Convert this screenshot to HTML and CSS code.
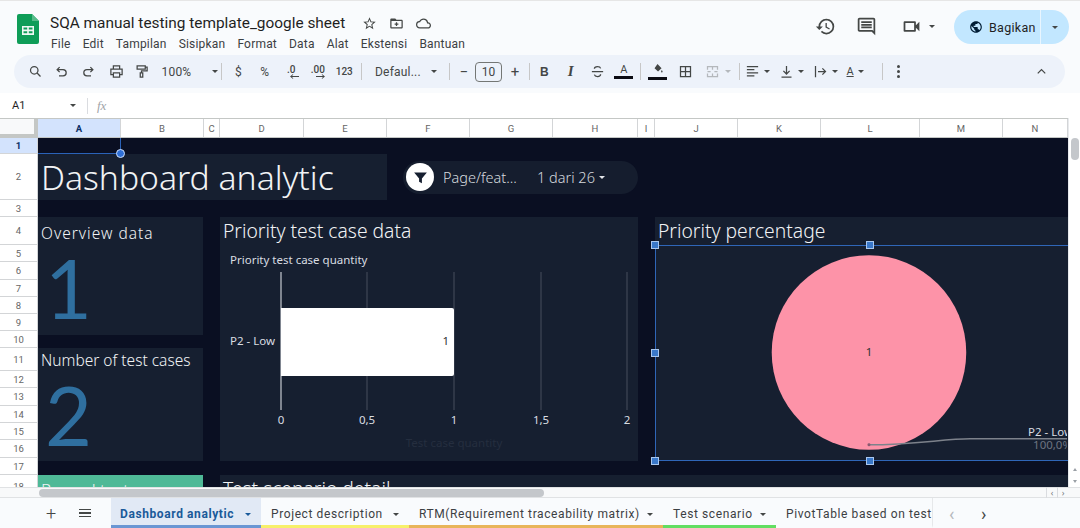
FILE: index.html
```html
<!DOCTYPE html>
<html lang="en">
<head>
  <meta charset="UTF-8" />
  <title>SQA manual testing template_google sheet</title>
  <link rel="stylesheet" href="styles.css">
</head>
<body>

  <!-- Title bar -->
  <header class="topbar">
    <svg class="logo" viewBox="0 0 22 30">
      <path d="M2 0h13l7 7v21a2 2 0 0 1-2 2H2a2 2 0 0 1-2-2V2a2 2 0 0 1 2-2z" fill="#0f9d58"/>
      <path d="M15 0l7 7h-7z" fill="#57bb8a"/>
      <path d="M5 12h12v9H5z M6.500 13.500v2h3.700v-2z M11.800 13.500v2h3.700v-2z M6.500 17.300v2h3.700v-2z M11.800 17.300v2h3.700v-2z" fill="#f1f8f4" fill-rule="evenodd"/>
    </svg>
    <div class="doc-info">
      <div class="doc-title-row">
        <span class="doc-title">SQA manual testing template_google sheet</span>
        <svg class="doc-icon" viewBox="0 0 24 24"><path d="M22 9.240l-7.190-.620L12 2 9.190 8.630 2 9.240l5.460 4.730L5.820 21 12 17.270 18.180 21l-1.630-7.030L22 9.240zM12 15.400l-3.760 2.270 1-4.280-3.320-2.880 4.380-.380L12 6.100l1.710 4.040 4.380.380-3.320 2.880 1 4.280L12 15.400z"/></svg>
        <svg class="doc-icon" viewBox="0 0 24 24"><path d="M20 6h-8l-2-2H4c-1.100 0-2 .9-2 2v12c0 1.100.9 2 2 2h16c1.100 0 2-.9 2-2V8c0-1.100-.9-2-2-2zm0 12H4V8h16v10zM11 10h2v2h2v2h-2v2h-2v-2H9v-2h2z"/></svg>
        <svg class="doc-icon" viewBox="0 0 24 24"><path d="M19.350 10.040A7.490 7.490 0 0 0 12 4C9.110 4 6.600 5.640 5.350 8.040A5.994 5.994 0 0 0 0 14c0 3.310 2.690 6 6 6h13c2.760 0 5-2.240 5-5 0-2.640-2.050-4.780-4.650-4.960zM19 18H6c-2.210 0-4-1.790-4-4 0-2.050 1.530-3.760 3.560-3.970l1.070-.11.500-.95A5.469 5.469 0 0 1 12 6c2.620 0 4.880 1.860 5.390 4.430l.3 1.500 1.530.11A2.980 2.980 0 0 1 22 15c0 1.650-1.350 3-3 3z"/></svg>
      </div>
      <nav class="menu">
        <span>File</span><span>Edit</span><span>Tampilan</span><span>Sisipkan</span><span>Format</span><span>Data</span><span>Alat</span><span>Ekstensi</span><span>Bantuan</span>
      </nav>
    </div>
    <div class="top-actions">
      <svg class="top-icon" viewBox="0 0 24 24"><path d="M13 3a9 9 0 0 0-9 9H1l3.890 3.890.07.140L9 12H6c0-3.870 3.130-7 7-7s7 3.130 7 7-3.130 7-7 7c-1.930 0-3.680-.79-4.940-2.060l-1.420 1.420A8.954 8.954 0 0 0 13 21a9 9 0 0 0 0-18zm-1 5v5l4.280 2.540.72-1.210-3.500-2.080V8H12z"/></svg>
      <svg class="top-icon" viewBox="0 0 24 24"><path d="M21.990 4c0-1.100-.89-2-1.990-2H4c-1.100 0-2 .9-2 2v12c0 1.100.9 2 2 2h14l4 4-.01-18zM20 4v13.170L18.830 16H4V4h16zM6 12h12v2H6zm0-3h12v2H6zm0-3h12v2H6z"/></svg>
      <div class="meet">
        <svg class="top-icon" viewBox="0 0 24 24"><path d="M15 8v8H5V8h10m1-2H4c-.55 0-1 .45-1 1v10c0 .55.45 1 1 1h12c.55 0 1-.45 1-1v-3.500l4 4v-11l-4 4V7c0-.55-.45-1-1-1z"/></svg>
        <i class="caret"></i>
      </div>
      <div class="share">
        <div class="share-main">
          <svg class="globe" viewBox="0 0 24 24"><path d="M12 2C6.480 2 2 6.480 2 12s4.480 10 10 10 10-4.480 10-10S17.520 2 12 2zm-1 17.930c-3.950-.49-7-3.850-7-7.930 0-.62.08-1.210.21-1.790L9 15v1c0 1.100.9 2 2 2v1.930zm6.900-2.540c-.26-.81-1-1.390-1.900-1.390h-1v-3c0-.55-.45-1-1-1H8v-2h2c.55 0 1-.45 1-1V7h2c1.100 0 2-.9 2-2v-.41c2.930 1.190 5 4.060 5 7.410 0 2.080-.8 3.970-2.100 5.390z"/></svg>
          <span>Bagikan</span>
        </div>
        <div class="share-more"><i class="caret"></i></div>
      </div>
    </div>
  </header>

  <!-- Toolbar -->
  <div class="toolbar">
    <button class="tb"><svg viewBox="0 0 24 24"><circle cx="10" cy="10" r="6"/><path d="M14.500 14.500L20 20"/></svg></button>
    <button class="tb"><svg viewBox="0 0 24 24"><path d="M9 5L5 9l4 4M5 9h9.500a5 5 0 0 1 0 10H8"/></svg></button>
    <button class="tb"><svg viewBox="0 0 24 24"><path d="M15 5l4 4-4 4M19 9H9.500a5 5 0 0 0 0 10H16"/></svg></button>
    <button class="tb tb-print"><svg viewBox="0 0 24 24"><path d="M7 8V3h10v5M7 17H3v-9h18v9h-4M7 14h10v7H7z"/></svg></button>
    <button class="tb"><svg viewBox="0 0 24 24"><path d="M5 3h13v5H5zM18 5h3v6h-9v3M10 14h4v7h-4z"/></svg></button>
    <div class="tb-select zoom-select">100%<i class="caret"></i></div>
    <i class="sep"></i>
    <button class="tb tb-text">$</button>
    <button class="tb tb-text">%</button>
    <button class="tb tb-text tb-small tb-stack">.0<svg viewBox="0 0 12 6"><path d="M12 3H2M5 0.500L2 3l3 2.500"/></svg></button>
    <button class="tb tb-text tb-small tb-stack">.00<svg viewBox="0 0 12 6"><path d="M0 3h10M7 0.500L10 3 7 5.500"/></svg></button>
    <button class="tb tb-text tb-small">123</button>
    <i class="sep"></i>
    <div class="tb-select font-select">Defaul...<i class="caret"></i></div>
    <i class="sep"></i>
    <button class="tb tb-text tb-size">−</button>
    <div class="size-box">10</div>
    <button class="tb tb-text tb-size tb-plus">+</button>
    <i class="sep"></i>
    <button class="tb tb-text tb-bold">B</button>
    <button class="tb tb-text tb-italic">I</button>
    <button class="tb"><svg viewBox="0 0 24 24"><path d="M3 12h18M17 7c-.5-2-2.500-3-5-3-2.500 0-5 1-5 3.500M7 17c.5 2 2.500 3 5 3 2.500 0 5-1 5-3.500"/></svg></button>
    <button class="tb tb-color"><span>A</span><i class="color-bar"></i></button>
    <i class="sep"></i>
    <button class="tb tb-color"><svg viewBox="0 0 24 24"><path class="filled" d="M12 2l7.500 7.500-6.500 6-6.500-6zM20 13c1 1.500 1.500 2.300 1.500 3a1.500 1.500 0 0 1-3 0c0-.7.5-1.500 1.500-3z"/></svg><i class="color-bar"></i></button>
    <button class="tb tb-border"><svg viewBox="0 0 24 24"><path d="M4 4h16v16H4zM12 4v16M4 12h16"/></svg></button>
    <button class="tb tb-muted"><svg viewBox="0 0 24 24"><path d="M4 9V4h16v5M4 15v5h16v-5M12 4v5M12 15v5M4 12h5M20 12h-5"/></svg></button>
    <i class="caret caret-muted"></i>
    <i class="sep"></i>
    <button class="tb tb-drop"><svg viewBox="0 0 24 24"><path d="M3 4h18M3 9h12M3 14h18M3 19h12"/></svg><i class="caret"></i></button>
    <button class="tb tb-drop"><svg viewBox="0 0 24 24"><path d="M12 3v13M7 11l5 5 5-5M4 21h16"/></svg><i class="caret"></i></button>
    <button class="tb tb-drop"><svg viewBox="0 0 24 24"><path d="M4 3v18M8 12h12M15 7l5 5-5 5"/></svg><i class="caret"></i></button>
    <button class="tb tb-drop tb-rotate"><span>A</span><i class="caret"></i></button>
    <i class="sep"></i>
    <button class="tb tb-dots"><i></i><i></i><i></i></button>
    <button class="tb tb-collapse"><svg viewBox="0 0 24 24"><path d="M6 15l6-6 6 6"/></svg></button>
  </div>

  <!-- Formula bar -->
  <div class="formula-bar">
    <span class="cell-ref">A1</span>
    <i class="caret"></i>
    <i class="formula-sep"></i>
    <span class="fx">fx</span>
  </div>

  <!-- Grid -->
  <div class="sheet">
    <div class="corner"></div>
    <div class="col-heads">
      <span class="active">A</span><span>B</span><span>C</span><span>D</span><span>E</span><span>F</span><span>G</span><span>H</span><span>I</span><span>J</span><span>K</span><span>L</span><span>M</span><span>N</span>
    </div>
    <div class="vscroll">
      <i class="vthumb"></i>
      <i class="varrow varrow-up"></i>
      <i class="varrow varrow-down"></i>
    </div>
    <div class="row-heads">
      <span class="active">1</span><span>2</span><span>3</span><span>4</span><span>5</span><span>6</span><span>7</span><span>8</span><span>9</span><span>10</span><span>11</span><span>12</span><span>13</span><span>14</span><span>15</span><span>16</span><span>17</span><span>18</span>
    </div>

    <div class="canvas">
      <div class="selected-cell"><i class="cell-handle"></i></div>
      <h1 class="dash-title">Dashboard analytic</h1>

      <div class="filter-chip">
        <span class="filter-btn">
          <svg viewBox="0 0 24 24"><path d="M3 5h18l-7 8.500V20l-4-2v-4.500z"/></svg>
        </span>
        <span class="filter-name">Page/feat...</span>
        <span class="filter-count">1 dari 26</span>
        <i class="caret caret-light"></i>
      </div>

      <section class="card stat-overview">
        <h2>Overview data</h2>
        <div class="big-num">1</div>
      </section>

      <section class="card stat-cases">
        <h2>Number of test cases</h2>
        <div class="big-num">2</div>
      </section>

      <section class="card stat-passed">
        <h2>Passed test</h2>
      </section>

      <section class="card chart-card">
        <h3>Priority test case data</h3>
        <svg class="chart" viewBox="0 0 418 216">
          <text class="chart-title" x="10" y="19">Priority test case quantity</text>
          <path class="axis" d="M61 27V165"/>
          <path class="grid-line" d="M147 27V165M234 27V165M321 27V165M407 27V165"/>
          <path class="bar" d="M61 63H232a2 2 0 0 1 2 2V129a2 2 0 0 1-2 2H61z"/>
          <text class="tick" x="10" y="100">P2 - Low</text>
          <text class="bar-value" x="229" y="100" text-anchor="end">1</text>
          <text class="tick" x="61" y="179" text-anchor="middle">0</text>
          <text class="tick" x="147" y="179" text-anchor="middle">0,5</text>
          <text class="tick" x="234" y="179" text-anchor="middle">1</text>
          <text class="tick" x="321" y="179" text-anchor="middle">1,5</text>
          <text class="tick" x="407" y="179" text-anchor="middle">2</text>
          <text class="axis-title" x="234" y="202" text-anchor="middle">Test case quantity</text>
        </svg>
      </section>

      <section class="card pie-card">
        <h3>Priority percentage</h3>
        <div class="pie-frame">
          <svg class="chart" viewBox="0 0 413 216">
            <circle cx="214.500" cy="107.500" r="97.500" fill="#fd93a8"/>
            <text class="bar-value" x="214.500" y="111" text-anchor="middle">1</text>
            <path class="pie-leader" d="M214.500 200C260 200 290 194 316 194H413"/>
            <circle cx="214.500" cy="200" r="1.500" fill="#8a5a70"/>
            <text class="tick" x="374" y="191">P2 - Low</text>
            <text class="tick-dim" x="379" y="204">100,0%</text>
          </svg>
          <i class="handle h-tl"></i>
          <i class="handle h-tc"></i>
          <i class="handle h-ml"></i>
          <i class="handle h-bl"></i>
          <i class="handle h-bc"></i>
        </div>
      </section>

      <section class="card detail-card">
        <h3>Test scenario detail</h3>
      </section>
    </div>
  </div>

  <!-- Horizontal scroll -->
  <div class="hscroll">
    <i class="hthumb"></i>
    <span class="harrows"><i>‹</i><i>›</i></span>
  </div>

  <!-- Sheet tabs -->
  <footer class="tabs">
    <span class="tab-tool tab-add">+</span>
    <span class="tab-tool tab-list"><i></i><i></i><i></i></span>
    <div class="tab tab-active">Dashboard analytic<i class="caret"></i></div>
    <div class="tab tab-yellow">Project description<i class="caret"></i></div>
    <div class="tab tab-orange">RTM(Requirement traceability matrix)<i class="caret"></i></div>
    <div class="tab tab-green">Test scenario<i class="caret"></i></div>
    <div class="tab tab-cut">PivotTable based on test</div>
    <span class="tab-arrow dim">‹</span>
    <span class="tab-arrow">›</span>
  </footer>

</body>
</html>
```

FILE: styles.css
```css
* {
  box-sizing: border-box;
  margin: 0;
  padding: 0;
}

html, body {
  height: 528px;
  overflow: hidden;
}

body {
  width: 1080px;
  background: #f9fbfd;
  color: #3c4043;
  font-family: "Open Sans", "Liberation Sans", sans-serif;
  display: flex;
  flex-direction: column;
}

.caret {
  display: inline-block;
  width: 0;
  height: 0;
  flex: none;
  border-left: 3.5px solid transparent;
  border-right: 3.5px solid transparent;
  border-top: 3.5px solid #444746;
}

/* Title bar */
.topbar {
  height: 55px;
  flex: none;
  display: flex;
  border-top: 1px solid #e6e6e6;
  padding: 13px 11px 0 17px;
}

.logo {
  width: 22px;
  height: 30px;
  flex: none;
}

.doc-info {
  margin-left: 11px;
  margin-top: -2px;
}

.doc-title-row {
  display: flex;
  align-items: center;
  height: 22px;
}

.doc-title {
  font-family: "Roboto", sans-serif;
  font-size: 15.4px;
  color: #1f1f1f;
  width: 312px;
}

.doc-icon {
  width: 15px;
  height: 15px;
  fill: #444746;
  margin-right: 12px;
}

.menu {
  display: flex;
  gap: 12px;
  font-family: "Roboto", sans-serif;
  font-size: 12px;
  line-height: 18px;
  letter-spacing: 0.2px;
  color: #3c4043;
  margin: 1px 0 0 1px;
}

.top-actions {
  margin-left: auto;
  display: flex;
  align-items: flex-start;
}

.top-icon {
  width: 21px;
  height: 21px;
  fill: #444746;
}

.top-actions > .top-icon {
  margin-top: 2px;
  margin-right: 20px;
}

.meet {
  display: flex;
  align-items: center;
  gap: 7px;
  margin: 2px 19px 0 4px;
  height: 21px;
}

.share {
  width: 115px;
  height: 34px;
  margin-top: -4px;
  background: #c2e7ff;
  border-radius: 17px;
  display: flex;
  font-family: "Roboto", sans-serif;
  font-size: 12.5px;
  letter-spacing: 0.3px;
  color: #1f1f1f;
}

.share-main {
  flex: 1;
  display: flex;
  align-items: center;
  gap: 6px;
  padding-left: 15px;
  border-right: 1px solid #e8f5fe;
}

.globe {
  width: 14px;
  height: 14px;
  fill: #001d35;
}

.share-more {
  width: 28px;
  display: flex;
  align-items: center;
  justify-content: center;
}

/* Toolbar */
.toolbar {
  height: 33px;
  flex: none;
  margin: 0 15px 0 14px;
  padding-left: 8px;
  background: #edf2fa;
  border-radius: 17px;
  display: flex;
  align-items: center;
}

.tb {
  width: 26.5px;
  height: 26px;
  flex: none;
  border: none;
  background: none;
  color: #444746;
  display: flex;
  align-items: center;
  justify-content: center;
  font-family: "Roboto", sans-serif;
  font-size: 12px;
}

.tb svg {
  width: 15px;
  height: 15px;
  fill: none;
  stroke: #444746;
  stroke-width: 2;
}

.tb-print {
  margin-left: 1.5px;
  margin-right: -1.5px;
}

.tb-small {
  font-size: 10px;
  font-weight: 500;
}

.tb-stack {
  flex-direction: column;
  line-height: 9px;
}

.tb-stack svg {
  width: 10px;
  height: 5px;
  stroke-width: 1.2;
  margin-left: 6px;
}

.tb-select {
  display: flex;
  align-items: center;
  font-family: "Roboto", sans-serif;
  font-size: 12px;
  letter-spacing: 0.2px;
  color: #444746;
  flex: none;
}

.zoom-select {
  width: 56.5px;
  margin-left: 7px;
  justify-content: space-between;
}

.font-select {
  width: 62px;
  margin-left: 10.5px;
  margin-right: 9px;
  justify-content: space-between;
}

.sep {
  width: 1px;
  height: 17px;
  background: #c7c7c7;
  margin: 0 3px;
  flex: none;
}

.tb-size {
  width: 22px;
  font-size: 15px;
}

.tb-plus {
  margin-left: 2px;
}

.size-box {
  width: 27px;
  height: 20px;
  flex: none;
  border: 1px solid #747775;
  border-radius: 4px;
  text-align: center;
  font-family: "Roboto", sans-serif;
  font-size: 12px;
  line-height: 18px;
  color: #444746;
}

.tb-bold {
  margin-left: -2px;
  font-weight: 700;
  font-family: "Liberation Sans", sans-serif;
}

.tb-italic {
  font-family: "Liberation Serif", serif;
  font-style: italic;
  font-size: 15px;
  font-weight: 700;
}

.tb-color {
  flex-direction: column;
  gap: 1px;
  font-size: 11px;
}

.tb-color span {
  line-height: 11px;
}

.tb-color svg {
  width: 13px;
  height: 13px;
}

.tb-color .filled {
  fill: #444746;
  stroke: none;
}

.color-bar {
  width: 19px;
  height: 3px;
  background: #0b0b12;
}

.tb-border {
  margin-left: 2px;
}

.tb-muted svg {
  stroke: #b4b8bc;
}

.caret-muted {
  border-top-color: #b4b8bc;
  margin: 0 5px 0 -1px;
}

.tb-drop {
  width: 34px;
  gap: 4px;
  justify-content: flex-start;
  padding-left: 2px;
}

.tb-rotate {
  font-size: 11px;
  text-decoration: underline;
}

.tb-dots {
  flex-direction: column;
  gap: 2px;
}

.tb-dots i {
  width: 3px;
  height: 3px;
  background: #444746;
  border-radius: 50%;
}

.tb-collapse {
  margin-left: auto;
  margin-right: 10px;
}

/* Formula bar */
.formula-bar {
  height: 25px;
  margin-top: 5px;
  flex: none;
  background: #fff;
  display: flex;
  align-items: center;
  padding-left: 12px;
  font-family: "Roboto", sans-serif;
  font-size: 11px;
  color: #1f1f1f;
}

.cell-ref {
  width: 58px;
}

.formula-sep {
  width: 1px;
  height: 16px;
  background: #dadce0;
  margin: 0 9px 0 11px;
}

.fx {
  font-family: "Liberation Serif", serif;
  font-style: italic;
  font-size: 13px;
  color: #a0a4a8;
}

/* Sheet grid */
.sheet {
  --cols: 83px 83px 16px 84px 83px 83px 83px 85px 17px 83px 83px 99px 83px 65px;
  --rows: 16px 46px 17px 28px 17px 18px 17px 17px 17px 17px 23px 17px 18px 17px 17px 18px 17px 24px;
  height: 369px;
  flex: none;
  display: grid;
  grid-template-columns: 38px 1030px 12px;
  grid-template-rows: 20px 349px;
  background: #fff;
  overflow: hidden;
}

.corner {
  background: #f8f9fa;
  border-right: 4px solid #c4c7c5;
  border-bottom: 4px solid #c4c7c5;
  border-top: 1px solid #c4c7c5;
}

.col-heads {
  display: grid;
  grid-template-columns: var(--cols);
  border-top: 1px solid #c4c7c5;
  border-bottom: 1px solid #c4c7c5;
  font-family: "Roboto", sans-serif;
  font-size: 9.500px;
  color: #666;
}

.col-heads span {
  display: flex;
  align-items: center;
  justify-content: center;
  border-right: 1px solid #d3d5d7;
}

.col-heads .active {
  background: #d3e3fd;
  color: #0b2f66;
  font-weight: 700;
}

.vscroll {
  grid-row: 1 / 3;
  grid-column: 3;
  background: #fff;
  border-left: 1px solid #e8eaed;
  padding: 20px 2px 0;
  display: flex;
  flex-direction: column;
  align-items: center;
}

.vthumb {
  width: 8px;
  height: 22px;
  background: #c4c7cb;
  border-radius: 4px;
}

.varrow {
  width: 0;
  height: 0;
  border-left: 2.5px solid transparent;
  border-right: 2.5px solid transparent;
}

.varrow-up {
  margin-top: auto;
  border-bottom: 3px solid #9aa0a6;
}

.varrow-down {
  margin: 9px 0 4px;
  border-top: 3px solid #9aa0a6;
}

.row-heads {
  display: grid;
  grid-template-rows: var(--rows);
  font-family: "Roboto", sans-serif;
  font-size: 9.500px;
  color: #666;
  overflow: hidden;
}

.row-heads span {
  display: flex;
  align-items: center;
  justify-content: center;
  border-bottom: 1px solid #d3d5d7;
  border-right: 1px solid #d3d5d7;
}

.row-heads .active {
  background: #d3e3fd;
  color: #0b2f66;
  font-weight: 700;
}

.canvas {
  display: grid;
  grid-template-columns: var(--cols);
  grid-template-rows: var(--rows);
  background: #0a0f22;
  font-family: "Noto Sans", sans-serif;
  font-weight: 300;
  color: #f1f3f5;
  overflow: hidden;
}

.selected-cell {
  grid-column: 1;
  grid-row: 1;
  border: 1px solid #2a62b8;
  border-width: 0 1px 1.500px 0;
  position: relative;
}

.cell-handle {
  position: absolute;
  right: -5px;
  bottom: -5px;
  width: 9px;
  height: 9px;
  background: #2f6fd6;
  border: 1px solid #cfe0fb;
  border-radius: 50%;
}

.dash-title {
  grid-column: 1 / 6;
  grid-row: 2;
  background: #161f30;
  font-size: 33.700px;
  font-weight: 300;
  line-height: 46px;
  padding-left: 3px;
  white-space: nowrap;
}

.filter-chip {
  grid-column: 6 / 9;
  grid-row: 2;
  align-self: center;
  height: 33px;
  margin-left: 16px;
  background: #151d2e;
  border-radius: 17px;
  display: flex;
  align-items: center;
  font-size: 14.500px;
  color: #d6dadf;
}

.filter-btn {
  width: 28px;
  height: 28px;
  margin-left: 3px;
  background: #fff;
  border-radius: 50%;
  display: flex;
  align-items: center;
  justify-content: center;
}

.filter-btn svg {
  width: 17px;
  height: 17px;
  fill: #161f30;
}

.filter-name {
  width: 94px;
  margin-left: 9px;
  white-space: nowrap;
}

.filter-count {
  margin-right: 4px;
  white-space: nowrap;
}

.caret-light {
  border-top-color: #e4e6ea;
}

.card {
  background: #161f30;
  overflow: hidden;
}

.stat-overview {
  grid-column: 1 / 3;
  grid-row: 4 / 10;
  margin: 0 1px -4px 0;
}

.stat-cases {
  grid-column: 1 / 3;
  grid-row: 11 / 17;
  margin: 0 1px -3px 0;
}

.stat-passed {
  grid-column: 1 / 3;
  grid-row: 18;
  margin-right: 1px;
  background: #4fb997;
}

.card h2 {
  font-size: 15.500px;
  font-weight: 300;
  line-height: 24px;
  padding: 4px 0 0 3px;
  white-space: nowrap;
}

.stat-overview h2 {
  letter-spacing: 1px;
}

.stat-cases h2 {
  padding-top: 0;
}

.stat-passed h2 {
  font-size: 17px;
  padding-top: 3px;
}

.big-num {
  font-family: "Lato", sans-serif;
  font-size: 81px;
  font-weight: 400;
  line-height: 88px;
  color: #2f6f9f;
  padding-left: 7px;
  margin-top: -1px;
}

.chart-card {
  grid-column: 4 / 9;
  grid-row: 4 / 17;
  margin-bottom: -3px;
}

.pie-card {
  grid-column: 10 / 15;
  grid-row: 4 / 17;
  margin-bottom: -3px;
  overflow: visible;
}

.detail-card {
  grid-column: 4 / 15;
  grid-row: 18;
}

.card h3 {
  font-size: 19.300px;
  font-weight: 300;
  line-height: 28px;
  padding-left: 3px;
  white-space: nowrap;
}

.chart {
  display: block;
  width: 100%;
  height: 216px;
  font-family: "Noto Sans", sans-serif;
  font-size: 11.500px;
  font-weight: 400;
}

.chart-title,
.tick {
  fill: #d9dde2;
}

.tick-dim {
  fill: #6d7480;
}

.axis {
  stroke: #c8ccd2;
  stroke-width: 1.200;
}

.grid-line {
  stroke: #474f5d;
  stroke-width: 1;
}

.bar {
  fill: #fff;
}

.bar-value {
  fill: #333;
}

.axis-title {
  fill: #252e3f;
}

.pie-frame {
  position: relative;
  height: 216px;
  border: 1px solid #2f66b8;
  border-right: none;
}

.pie-frame .chart {
  margin: -1px 0 0 -1px;
}

.pie-leader {
  fill: none;
  stroke: #7d828b;
  stroke-width: 1.500;
}

.handle {
  position: absolute;
  width: 8px;
  height: 8px;
  background: #3a78c9;
  border: 1px solid #a9c7ee;
}

.h-tl { left: -5px; top: -5px; }
.h-tc { left: 210px; top: -5px; }
.h-ml { left: -5px; top: 103px; }
.h-bl { left: -5px; bottom: -5px; }
.h-bc { left: 210px; bottom: -5px; }

/* Horizontal scroll */
.hscroll {
  height: 11px;
  flex: none;
  position: relative;
  background: #f8f9fa;
  border-top: 1px solid #e0e2e4;
  border-bottom: 1px solid #e0e2e4;
}

.hthumb {
  position: absolute;
  left: 39px;
  top: 1px;
  width: 505px;
  height: 8px;
  background: #c4c7cb;
  border-radius: 4px;
}

.harrows {
  position: absolute;
  right: 12px;
  top: -1px;
  display: flex;
  font-size: 9px;
  line-height: 11px;
  color: #70757a;
}

.harrows i {
  width: 11px;
  text-align: center;
  font-style: normal;
  border-left: 1px solid #dadce0;
}

/* Sheet tabs */
.tabs {
  flex: 1;
  display: flex;
  align-items: stretch;
  font-family: "Roboto", sans-serif;
  font-size: 12px;
  letter-spacing: 0.6px;
  color: #3c4043;
  white-space: nowrap;
}

.tab-tool {
  width: 33px;
  display: flex;
  align-items: center;
  justify-content: center;
  color: #444746;
}

.tab-add {
  margin-left: 35px;
  font-size: 18px;
  font-weight: 300;
}

.tab-list {
  flex-direction: column;
  gap: 2px;
  margin-right: 10px;
}

.tab-list i {
  width: 12px;
  height: 1.500px;
  background: #444746;
}

.tab {
  display: flex;
  align-items: center;
  justify-content: space-between;
  padding: 5px 10px 0;
  border-bottom: 3px solid transparent;
}

.tab-active {
  width: 150px;
  background: #e1e9f5;
  border-bottom-color: #6a96d3;
  color: #1a5a9a;
  font-weight: 700;
  padding-left: 9px;
}

.tab-active .caret {
  border-top-color: #1a5a9a;
}

.tab-yellow {
  width: 148px;
  border-bottom-color: #f7f06a;
}

.tab-orange {
  width: 254px;
  border-bottom-color: #e8b55a;
}

.tab-green {
  width: 113px;
  border-bottom-color: #62de62;
}

.tab-cut {
  width: 157px;
  overflow: hidden;
  border-right: 1px solid #e6e8ea;
}

.tab-arrow {
  width: 32px;
  display: flex;
  align-items: center;
  justify-content: center;
  font-size: 18px;
  color: #444746;
}

.tab-arrow.dim {
  color: #b4b8bc;
  margin-left: 3px;
}
```
